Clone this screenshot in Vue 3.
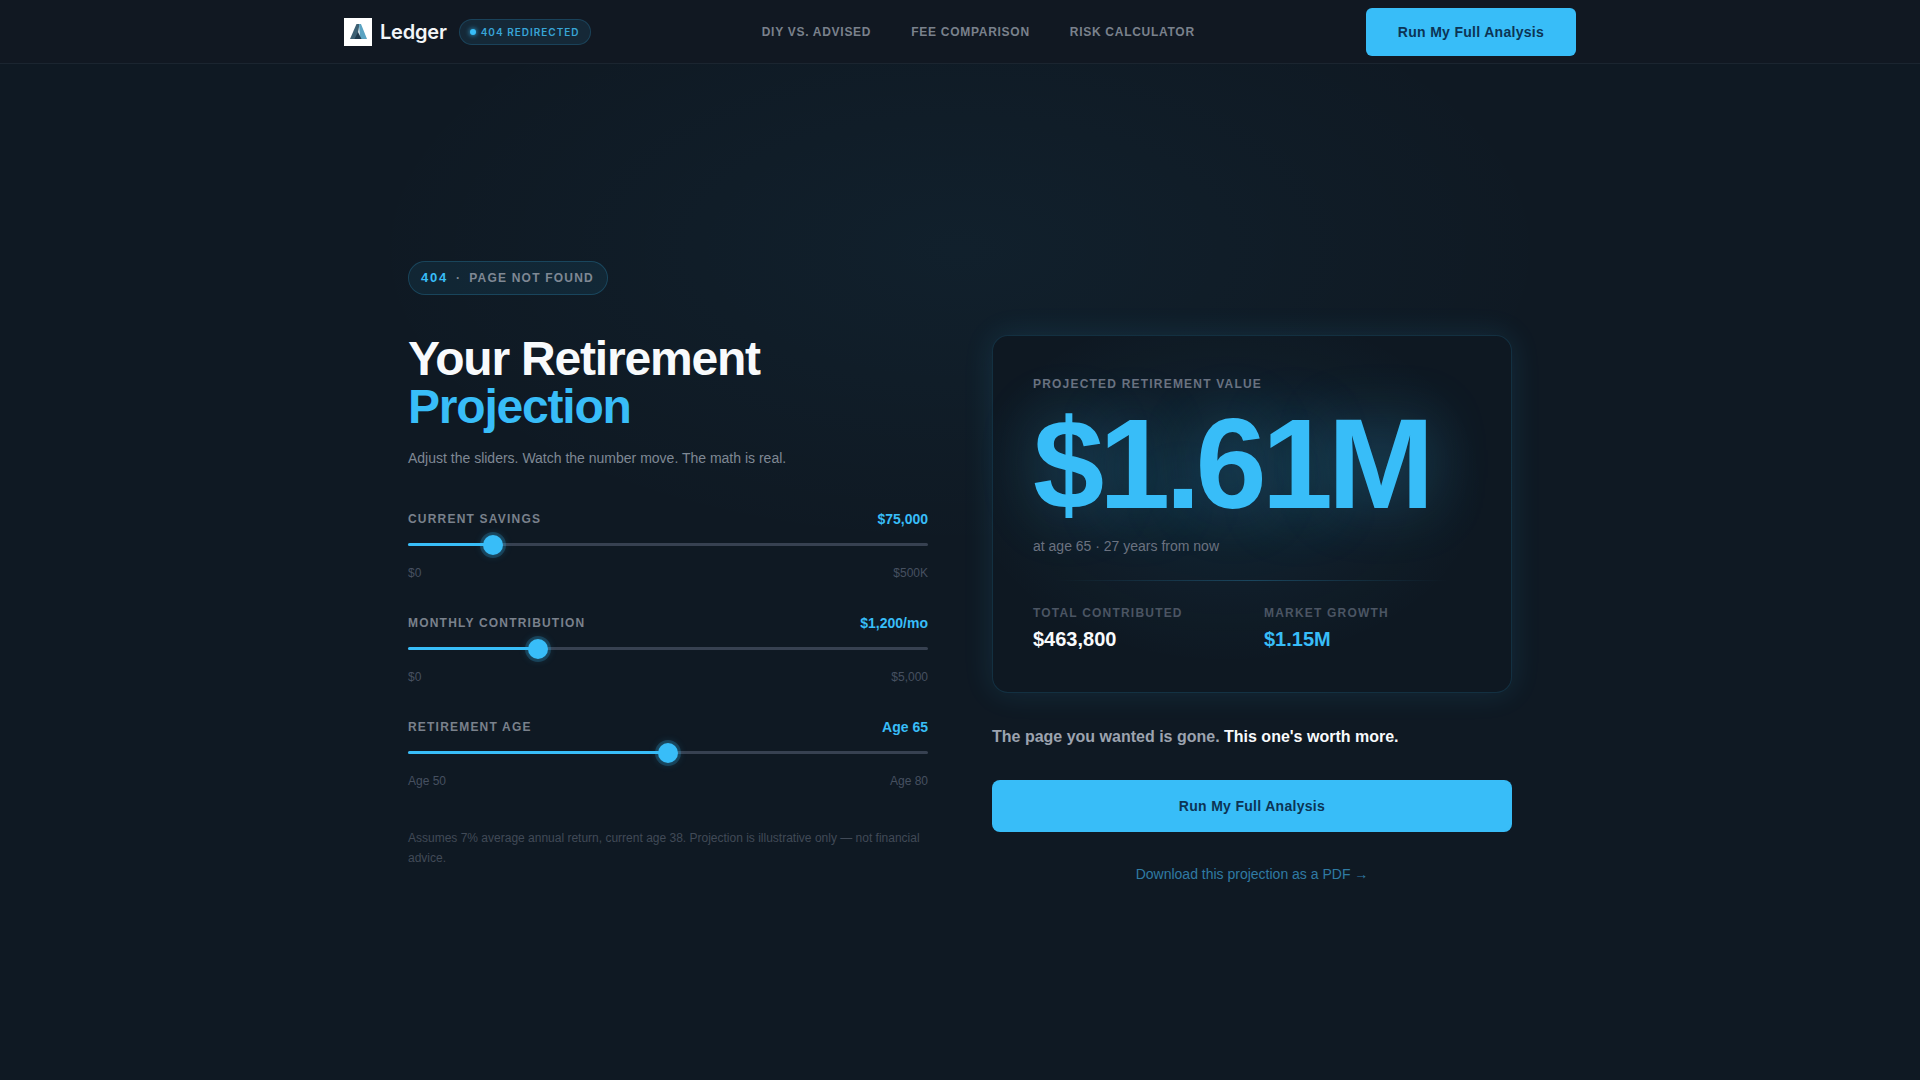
<script setup>
const links = ['DIY vs. Advised', 'Fee Comparison', 'Risk Calculator']
const sliders = [
  { label: 'Current Savings', value: '$75,000', min: '$0', max: '$500K', pct: 15 },
  { label: 'Monthly Contribution', value: '$1,200/mo', min: '$0', max: '$5,000', pct: 24 },
  { label: 'Retirement Age', value: 'Age 65', min: 'Age 50', max: 'Age 80', pct: 50 }
]
const thumbLeft = (pct) => `calc(10px + (100% - 20px) * ${pct / 100})`
</script>

<template>
  <div class="page">
    <header class="nav">
      <div class="nav-inner">
        <div class="brand">
          <span class="logo">
            <svg width="28" height="28" viewBox="0 0 28 28">
              <rect width="28" height="28" fill="#ffffff" />
              <g class="logo-mark">
                <path d="M6 21 L12.5 6 L15.5 6 L13 21 Z" fill="#3d6073" />
                <path d="M15 6 L17 6 L23 21 L16 21 Z" fill="#5aa3c2" />
                <path d="M10.5 21 L14 14 L17.5 21 Z" fill="#1f3a4d" />
              </g>
            </svg>
          </span>
          <span class="brand-name">Ledger</span>
          <span class="badge"><i class="badge-dot"></i>404 REDIRECTED</span>
        </div>
        <nav class="links">
          <a v-for="link in links" :key="link" class="link">{{ link }}</a>
        </nav>
        <button class="btn btn-nav">Run My Full Analysis</button>
      </div>
    </header>

    <main class="main">
      <div class="content">
        <div class="pill"><b>404</b><span class="sep">·</span><span>PAGE NOT FOUND</span></div>
        <div class="grid">
          <section class="left">
            <h1>Your Retirement<br /><em>Projection</em></h1>
            <p class="sub">Adjust the sliders. Watch the number move. The math is real.</p>
            <div class="sliders">
              <div v-for="s in sliders" :key="s.label" class="slider">
                <div class="slider-head">
                  <span class="slider-label">{{ s.label }}</span>
                  <span class="slider-value">{{ s.value }}</span>
                </div>
                <div class="track">
                  <div class="fill" :style="{ width: thumbLeft(s.pct) }"></div>
                  <div class="thumb" :style="{ left: thumbLeft(s.pct) }"></div>
                </div>
                <div class="slider-range"><span>{{ s.min }}</span><span>{{ s.max }}</span></div>
              </div>
            </div>
            <p class="note">Assumes 7% average annual return, current age 38. Projection is illustrative only — not financial advice.</p>
          </section>

          <section class="right">
            <div class="card">
              <div class="card-label">Projected Retirement Value</div>
              <div class="amount">$1.61M</div>
              <div class="when">at age 65 · 27 years from now</div>
              <div class="divider"></div>
              <div class="stats">
                <div>
                  <div class="stat-label">Total Contributed</div>
                  <div class="stat-value">$463,800</div>
                </div>
                <div>
                  <div class="stat-label">Market Growth</div>
                  <div class="stat-value blue">$1.15M</div>
                </div>
              </div>
            </div>
            <p class="gone">The page you wanted is gone. <strong>This one's worth more.</strong></p>
            <button class="btn btn-wide">Run My Full Analysis</button>
            <a class="pdf">Download this projection as a PDF →</a>
          </section>
        </div>
      </div>
    </main>
  </div>
</template>

<style>
html, body { margin: 0; background: #0f1923; }
</style>

<style scoped>
.page {
  min-height: 1080px;
  display: flex;
  flex-direction: column;
  background: radial-gradient(ellipse 600px 300px at 50% 250px, rgba(56, 189, 248, 0.045), transparent 100%), #0f1923;
  font-family: "Liberation Sans", Arial, sans-serif;
  color: #fff;
}
.nav {
  height: 63px;
  background: #111822;
  border-bottom: 1px solid #1b2530;
}
.nav-inner {
  box-sizing: border-box;
  width: 1280px;
  height: 100%;
  margin: 0 auto;
  padding: 0 24px;
  display: flex;
  align-items: center;
  justify-content: space-between;
}
.brand { display: flex; align-items: center; }
.logo { width: 28px; height: 28px; display: block; }
.logo svg { display: block; }
.logo-mark { filter: blur(0.5px); }
.brand-name {
  margin-left: 8px;
  font-family: Inter, sans-serif;
  font-weight: 600;
  font-size: 20px;
  letter-spacing: -0.2px;
  color: #f3f5f8;
}
.badge {
  margin-left: 12px;
  box-sizing: border-box;
  height: 26px;
  padding: 0 10px;
  display: flex;
  align-items: center;
  gap: 5px;
  border-radius: 13px;
  background: rgba(56, 189, 248, 0.1);
  border: 1px solid rgba(56, 189, 248, 0.18);
  font-family: Inter, sans-serif;
  font-size: 10px;
  font-weight: 600;
  letter-spacing: 1px;
  color: #38a5d8;
}
.badge-dot {
  width: 6px;
  height: 6px;
  border-radius: 50%;
  background: #38bdf8;
  box-shadow: 0 0 5px #38bdf8;
}
.links { display: flex; gap: 40px; }
.link {
  font-size: 12px;
  font-weight: 700;
  letter-spacing: 0.72px;
  text-transform: uppercase;
  color: #7a818c;
}
.btn {
  border: 0;
  background: #38bdf8;
  color: #0c3454;
  font-family: inherit;
  font-weight: 700;
  font-size: 14px;
  letter-spacing: 0.3px;
}
.btn-nav { width: 210px; height: 48px; border-radius: 6px; }
.main {
  flex: 1;
  display: flex;
  align-items: center;
  justify-content: center;
}
.content { width: 1104px; }
.pill {
  box-sizing: border-box;
  display: inline-flex;
  align-items: center;
  height: 34px;
  padding: 0 13px 0 12px;
  border-radius: 17px;
  background: rgba(56, 189, 248, 0.08);
  border: 1px solid rgba(56, 189, 248, 0.2);
  font-size: 12px;
  font-weight: 700;
  letter-spacing: 1.2px;
  color: #7f8894;
}
.pill b { color: #38bdf8; font-size: 13px; letter-spacing: 1.8px; }
.pill .sep { margin: 0 8px; }
.grid {
  margin-top: 40px;
  display: grid;
  grid-template-columns: 520px 520px;
  gap: 64px;
  align-items: start;
}
h1 {
  margin: 0;
  font-size: 48px;
  line-height: 48px;
  font-weight: 700;
  letter-spacing: -1.2px;
  color: #f8fafc;
}
h1 em { font-style: normal; color: #38bdf8; }
.sub { margin: 16px 0 0; font-size: 14px; line-height: 22px; color: #7f8894; }
.sliders { margin-top: 42px; display: flex; flex-direction: column; gap: 35px; }
.slider-head { display: flex; justify-content: space-between; align-items: center; height: 16px; }
.slider-label {
  font-size: 12px;
  font-weight: 700;
  letter-spacing: 1.2px;
  text-transform: uppercase;
  color: #7a818c;
}
.slider-value { font-size: 14px; font-weight: 700; color: #38bdf8; }
.track {
  position: relative;
  margin: 16px 0 0;
  height: 3px;
  background: #374151;
  border-radius: 2px;
}
.fill { height: 100%; background: #38bdf8; border-radius: 2px; }
.thumb {
  position: absolute;
  top: -7.5px;
  width: 20px;
  height: 20px;
  margin-left: -10px;
  border-radius: 50%;
  background: #38bdf8;
  box-shadow: 0 0 0 3px rgba(56, 189, 248, 0.2), 0 0 10px rgba(56, 189, 248, 0.3);
}
.slider-range {
  margin-top: 20px;
  display: flex;
  justify-content: space-between;
  font-size: 12px;
  line-height: 14px;
  color: #465060;
}
.note { margin: 40px 0 0; font-size: 12px; line-height: 20px; color: #414a57; }
.card {
  box-sizing: border-box;
  height: 358px;
  padding: 40px;
  border-radius: 16px;
  border: 1px solid rgba(56, 189, 248, 0.15);
  background: radial-gradient(ellipse 50% 50% at 45% 42%, rgba(56, 189, 248, 0.08), transparent 100%), #0e1822;
  box-shadow: 0 0 30px rgba(56, 189, 248, 0.12);
}
.card-label {
  font-size: 12px;
  line-height: 16px;
  font-weight: 700;
  letter-spacing: 1.2px;
  text-transform: uppercase;
  color: #6b7280;
}
.amount {
  margin-top: 8px;
  font-size: 128px;
  line-height: 128px;
  font-weight: 700;
  letter-spacing: -5.12px;
  color: #38bdf8;
  text-shadow: 0 0 60px rgba(56, 189, 248, 0.3);
}
.when { margin-top: 8px; font-size: 14px; line-height: 20px; color: #6b7280; }
.divider {
  margin-top: 24px;
  height: 1px;
  background: linear-gradient(90deg, transparent 5%, rgba(56, 189, 248, 0.25) 50%, transparent 95%);
}
.stats { margin-top: 24px; display: grid; grid-template-columns: 1fr 1fr; gap: 24px; }
.stat-label {
  font-size: 12px;
  line-height: 16px;
  font-weight: 700;
  letter-spacing: 1.2px;
  text-transform: uppercase;
  color: #4b5563;
}
.stat-value { margin-top: 5px; font-size: 20px; line-height: 26px; font-weight: 700; color: #f8fafc; }
.stat-value.blue { color: #38bdf8; }
.gone { margin: 32px 0 0; font-size: 16px; line-height: 24px; font-weight: 700; color: #9ca3af; }
.gone strong { color: #f8fafc; }
.btn-wide { display: block; margin-top: 31px; width: 100%; height: 52px; border-radius: 8px; }
.pdf {
  display: block;
  margin-top: 32px;
  text-align: center;
  font-size: 14px;
  line-height: 20px;
  color: #2f7ba3;
}
</style>
